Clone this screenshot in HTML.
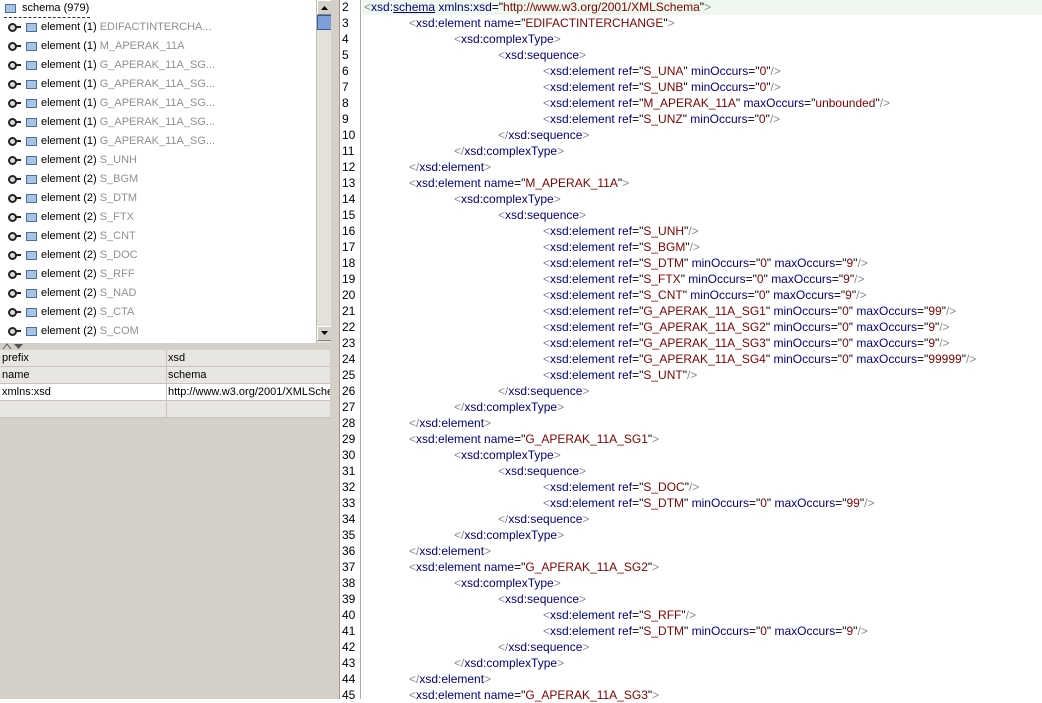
<!DOCTYPE html>
<html><head><meta charset="utf-8"><style>
*{margin:0;padding:0;box-sizing:border-box}
body{width:1042px;height:699px;overflow:hidden;background:#fff;font-family:"Liberation Sans",Arial,sans-serif;font-size:12px;position:relative}
.abs{position:absolute}
#left{left:0;top:0;width:331px;height:699px;background:#d4d0c8}
#tree{left:0;top:0;width:316px;height:343px;background:#fff;font-size:11px}
.row{position:absolute;left:0;height:19px;line-height:19px;white-space:nowrap;color:#000}
.row .g{color:#909090}
.tog{position:absolute;left:8px;top:5px;width:9px;height:9px;border:2.5px solid #222;border-radius:50%;background:#ddd}
.tog:after{content:"";position:absolute;left:6px;top:1px;width:5px;height:2px;background:#222}
.ico{position:absolute;width:11px;height:9px;border:1px solid #4a6f9c;background:#a8c4e4;top:5px}
#sb{left:316px;top:0;width:15px;height:343px;background:#e4e1da;border-left:1px solid #bbb}
.btn{position:absolute;left:0;width:15px;height:15px;background:#d4d0c8;border:1px solid #fff;border-right-color:#808080;border-bottom-color:#808080}
#tbl{left:0;top:350px;width:331px;font-size:11px}
.tr{position:absolute;left:0;width:330px;height:17px;line-height:16px;border-bottom:1px solid #c8c4bc;background:#e8e6e2}
.tr span{position:absolute;top:0}
.tr .c2{left:166px;border-left:1px solid #c8c4bc;padding-left:1px;height:17px}
#split{left:331px;top:0;width:9px;height:699px;background:#d4d0c8;border-right:1px solid #999}
#gut{left:340px;top:0;width:21px;height:699px;background:#fff;border-right:1px solid #aaa}
.ln{position:absolute;left:2px;height:16px;line-height:16px;color:#000;font-size:12px}
.cl{position:absolute;height:16px;line-height:16px;white-space:nowrap;color:#000}
.b{color:#8a8a9a}.t{color:#000080}.v{color:#800000}
</style></head><body>
<div id="left" class="abs">
<div id="tree" class="abs">
<div class="row" style="top:-1px;left:0"><span class="ico" style="left:5px"></span><span style="position:absolute;left:22px">schema (979)</span></div>
<div class="abs" style="left:4px;top:17px;width:86px;border-top:1px dashed #333"></div>
<div class="row" style="top:18px"><span class="tog"></span><span class="ico" style="left:26px"></span><span style="position:absolute;left:41px">element (1) <span class="g">EDIFACTINTERCHA...</span></span></div>
<div class="row" style="top:37px"><span class="tog"></span><span class="ico" style="left:26px"></span><span style="position:absolute;left:41px">element (1) <span class="g">M_APERAK_11A</span></span></div>
<div class="row" style="top:56px"><span class="tog"></span><span class="ico" style="left:26px"></span><span style="position:absolute;left:41px">element (1) <span class="g">G_APERAK_11A_SG...</span></span></div>
<div class="row" style="top:75px"><span class="tog"></span><span class="ico" style="left:26px"></span><span style="position:absolute;left:41px">element (1) <span class="g">G_APERAK_11A_SG...</span></span></div>
<div class="row" style="top:94px"><span class="tog"></span><span class="ico" style="left:26px"></span><span style="position:absolute;left:41px">element (1) <span class="g">G_APERAK_11A_SG...</span></span></div>
<div class="row" style="top:113px"><span class="tog"></span><span class="ico" style="left:26px"></span><span style="position:absolute;left:41px">element (1) <span class="g">G_APERAK_11A_SG...</span></span></div>
<div class="row" style="top:132px"><span class="tog"></span><span class="ico" style="left:26px"></span><span style="position:absolute;left:41px">element (1) <span class="g">G_APERAK_11A_SG...</span></span></div>
<div class="row" style="top:151px"><span class="tog"></span><span class="ico" style="left:26px"></span><span style="position:absolute;left:41px">element (2) <span class="g">S_UNH</span></span></div>
<div class="row" style="top:170px"><span class="tog"></span><span class="ico" style="left:26px"></span><span style="position:absolute;left:41px">element (2) <span class="g">S_BGM</span></span></div>
<div class="row" style="top:189px"><span class="tog"></span><span class="ico" style="left:26px"></span><span style="position:absolute;left:41px">element (2) <span class="g">S_DTM</span></span></div>
<div class="row" style="top:208px"><span class="tog"></span><span class="ico" style="left:26px"></span><span style="position:absolute;left:41px">element (2) <span class="g">S_FTX</span></span></div>
<div class="row" style="top:227px"><span class="tog"></span><span class="ico" style="left:26px"></span><span style="position:absolute;left:41px">element (2) <span class="g">S_CNT</span></span></div>
<div class="row" style="top:246px"><span class="tog"></span><span class="ico" style="left:26px"></span><span style="position:absolute;left:41px">element (2) <span class="g">S_DOC</span></span></div>
<div class="row" style="top:265px"><span class="tog"></span><span class="ico" style="left:26px"></span><span style="position:absolute;left:41px">element (2) <span class="g">S_RFF</span></span></div>
<div class="row" style="top:284px"><span class="tog"></span><span class="ico" style="left:26px"></span><span style="position:absolute;left:41px">element (2) <span class="g">S_NAD</span></span></div>
<div class="row" style="top:303px"><span class="tog"></span><span class="ico" style="left:26px"></span><span style="position:absolute;left:41px">element (2) <span class="g">S_CTA</span></span></div>
<div class="row" style="top:322px"><span class="tog"></span><span class="ico" style="left:26px"></span><span style="position:absolute;left:41px">element (2) <span class="g">S_COM</span></span></div>
</div>
<div id="sb" class="abs">
<div class="btn" style="top:0"><svg width="13" height="13" style="position:absolute;left:0;top:0"><path d="M3 9h7L6.5 5z" fill="#000"/></svg></div>
<div class="abs" style="left:0;top:15px;width:15px;height:15px;background:#7f9fd8;border:1px solid #3a5a9a"></div>
<div class="btn" style="top:326px"><svg width="13" height="13" style="position:absolute;left:0;top:0"><path d="M3 4h7L6.5 8z" fill="#000"/></svg></div>
</div>
<div class="abs" style="left:0;top:343px;width:331px;height:7px;background:#d4d0c8"><svg width="30" height="7" style="position:absolute;left:2px;top:0"><path d="M1 6l4-5 4 5" fill="none" stroke="#555"/><path d="M12 1h9l-4.5 5z" fill="#555"/></svg></div>
<div id="tbl" class="abs">
<div class="tr" style="top:0"><span style="left:2px">prefix</span><span class="c2">xsd</span></div>
<div class="tr" style="top:17px"><span style="left:2px">name</span><span class="c2">schema</span></div>
<div class="tr" style="top:34px;background:#fff"><span style="left:2px">xmlns:xsd</span><span class="c2" style="width:164px;overflow:hidden;white-space:nowrap">http://www.w3.org/2001/XMLSchema</span></div>
<div class="tr" style="top:51px"><span style="left:2px"></span><span class="c2">&nbsp;</span></div>
</div>
</div>
<div id="split" class="abs"></div>
<div id="gut" class="abs">
<div class="ln" style="top:-1px">2</div><div class="ln" style="top:15px">3</div><div class="ln" style="top:31px">4</div><div class="ln" style="top:47px">5</div><div class="ln" style="top:63px">6</div><div class="ln" style="top:79px">7</div><div class="ln" style="top:95px">8</div><div class="ln" style="top:111px">9</div><div class="ln" style="top:127px">10</div><div class="ln" style="top:143px">11</div><div class="ln" style="top:159px">12</div><div class="ln" style="top:175px">13</div><div class="ln" style="top:191px">14</div><div class="ln" style="top:207px">15</div><div class="ln" style="top:223px">16</div><div class="ln" style="top:239px">17</div><div class="ln" style="top:255px">18</div><div class="ln" style="top:271px">19</div><div class="ln" style="top:287px">20</div><div class="ln" style="top:303px">21</div><div class="ln" style="top:319px">22</div><div class="ln" style="top:335px">23</div><div class="ln" style="top:351px">24</div><div class="ln" style="top:367px">25</div><div class="ln" style="top:383px">26</div><div class="ln" style="top:399px">27</div><div class="ln" style="top:415px">28</div><div class="ln" style="top:431px">29</div><div class="ln" style="top:447px">30</div><div class="ln" style="top:463px">31</div><div class="ln" style="top:479px">32</div><div class="ln" style="top:495px">33</div><div class="ln" style="top:511px">34</div><div class="ln" style="top:527px">35</div><div class="ln" style="top:543px">36</div><div class="ln" style="top:559px">37</div><div class="ln" style="top:575px">38</div><div class="ln" style="top:591px">39</div><div class="ln" style="top:607px">40</div><div class="ln" style="top:623px">41</div><div class="ln" style="top:639px">42</div><div class="ln" style="top:655px">43</div><div class="ln" style="top:671px">44</div><div class="ln" style="top:687px">45</div>
</div>
<div class="abs" style="left:362px;top:0;width:680px;height:15px;background:#eef8ee"></div>
<div class="cl" style="top:-1px;left:364px"><span class="b">&lt;</span><span class="t">xsd:<u>schema</u> xmlns:xsd</span>="<span class="v">http://www.w3.org/2001/XMLSchema</span>"<span class="b">&gt;</span></div>
<div class="cl" style="top:15px;left:409px"><span class="b">&lt;</span><span class="t">xsd:element name</span>="<span class="v">EDIFACTINTERCHANGE</span>"<span class="b">&gt;</span></div>
<div class="cl" style="top:31px;left:454px"><span class="b">&lt;</span><span class="t">xsd:complexType</span><span class="b">&gt;</span></div>
<div class="cl" style="top:47px;left:498px"><span class="b">&lt;</span><span class="t">xsd:sequence</span><span class="b">&gt;</span></div>
<div class="cl" style="top:63px;left:543px"><span class="b">&lt;</span><span class="t">xsd:element ref</span>="<span class="v">S_UNA</span>" <span class="t">minOccurs</span>="<span class="v">0</span>"<span class="b">/&gt;</span></div>
<div class="cl" style="top:79px;left:543px"><span class="b">&lt;</span><span class="t">xsd:element ref</span>="<span class="v">S_UNB</span>" <span class="t">minOccurs</span>="<span class="v">0</span>"<span class="b">/&gt;</span></div>
<div class="cl" style="top:95px;left:543px"><span class="b">&lt;</span><span class="t">xsd:element ref</span>="<span class="v">M_APERAK_11A</span>" <span class="t">maxOccurs</span>="<span class="v">unbounded</span>"<span class="b">/&gt;</span></div>
<div class="cl" style="top:111px;left:543px"><span class="b">&lt;</span><span class="t">xsd:element ref</span>="<span class="v">S_UNZ</span>" <span class="t">minOccurs</span>="<span class="v">0</span>"<span class="b">/&gt;</span></div>
<div class="cl" style="top:127px;left:498px"><span class="b">&lt;/</span><span class="t">xsd:sequence</span><span class="b">&gt;</span></div>
<div class="cl" style="top:143px;left:454px"><span class="b">&lt;/</span><span class="t">xsd:complexType</span><span class="b">&gt;</span></div>
<div class="cl" style="top:159px;left:409px"><span class="b">&lt;/</span><span class="t">xsd:element</span><span class="b">&gt;</span></div>
<div class="cl" style="top:175px;left:409px"><span class="b">&lt;</span><span class="t">xsd:element name</span>="<span class="v">M_APERAK_11A</span>"<span class="b">&gt;</span></div>
<div class="cl" style="top:191px;left:454px"><span class="b">&lt;</span><span class="t">xsd:complexType</span><span class="b">&gt;</span></div>
<div class="cl" style="top:207px;left:498px"><span class="b">&lt;</span><span class="t">xsd:sequence</span><span class="b">&gt;</span></div>
<div class="cl" style="top:223px;left:543px"><span class="b">&lt;</span><span class="t">xsd:element ref</span>="<span class="v">S_UNH</span>"<span class="b">/&gt;</span></div>
<div class="cl" style="top:239px;left:543px"><span class="b">&lt;</span><span class="t">xsd:element ref</span>="<span class="v">S_BGM</span>"<span class="b">/&gt;</span></div>
<div class="cl" style="top:255px;left:543px"><span class="b">&lt;</span><span class="t">xsd:element ref</span>="<span class="v">S_DTM</span>" <span class="t">minOccurs</span>="<span class="v">0</span>" <span class="t">maxOccurs</span>="<span class="v">9</span>"<span class="b">/&gt;</span></div>
<div class="cl" style="top:271px;left:543px"><span class="b">&lt;</span><span class="t">xsd:element ref</span>="<span class="v">S_FTX</span>" <span class="t">minOccurs</span>="<span class="v">0</span>" <span class="t">maxOccurs</span>="<span class="v">9</span>"<span class="b">/&gt;</span></div>
<div class="cl" style="top:287px;left:543px"><span class="b">&lt;</span><span class="t">xsd:element ref</span>="<span class="v">S_CNT</span>" <span class="t">minOccurs</span>="<span class="v">0</span>" <span class="t">maxOccurs</span>="<span class="v">9</span>"<span class="b">/&gt;</span></div>
<div class="cl" style="top:303px;left:543px"><span class="b">&lt;</span><span class="t">xsd:element ref</span>="<span class="v">G_APERAK_11A_SG1</span>" <span class="t">minOccurs</span>="<span class="v">0</span>" <span class="t">maxOccurs</span>="<span class="v">99</span>"<span class="b">/&gt;</span></div>
<div class="cl" style="top:319px;left:543px"><span class="b">&lt;</span><span class="t">xsd:element ref</span>="<span class="v">G_APERAK_11A_SG2</span>" <span class="t">minOccurs</span>="<span class="v">0</span>" <span class="t">maxOccurs</span>="<span class="v">9</span>"<span class="b">/&gt;</span></div>
<div class="cl" style="top:335px;left:543px"><span class="b">&lt;</span><span class="t">xsd:element ref</span>="<span class="v">G_APERAK_11A_SG3</span>" <span class="t">minOccurs</span>="<span class="v">0</span>" <span class="t">maxOccurs</span>="<span class="v">9</span>"<span class="b">/&gt;</span></div>
<div class="cl" style="top:351px;left:543px"><span class="b">&lt;</span><span class="t">xsd:element ref</span>="<span class="v">G_APERAK_11A_SG4</span>" <span class="t">minOccurs</span>="<span class="v">0</span>" <span class="t">maxOccurs</span>="<span class="v">99999</span>"<span class="b">/&gt;</span></div>
<div class="cl" style="top:367px;left:543px"><span class="b">&lt;</span><span class="t">xsd:element ref</span>="<span class="v">S_UNT</span>"<span class="b">/&gt;</span></div>
<div class="cl" style="top:383px;left:498px"><span class="b">&lt;/</span><span class="t">xsd:sequence</span><span class="b">&gt;</span></div>
<div class="cl" style="top:399px;left:454px"><span class="b">&lt;/</span><span class="t">xsd:complexType</span><span class="b">&gt;</span></div>
<div class="cl" style="top:415px;left:409px"><span class="b">&lt;/</span><span class="t">xsd:element</span><span class="b">&gt;</span></div>
<div class="cl" style="top:431px;left:409px"><span class="b">&lt;</span><span class="t">xsd:element name</span>="<span class="v">G_APERAK_11A_SG1</span>"<span class="b">&gt;</span></div>
<div class="cl" style="top:447px;left:454px"><span class="b">&lt;</span><span class="t">xsd:complexType</span><span class="b">&gt;</span></div>
<div class="cl" style="top:463px;left:498px"><span class="b">&lt;</span><span class="t">xsd:sequence</span><span class="b">&gt;</span></div>
<div class="cl" style="top:479px;left:543px"><span class="b">&lt;</span><span class="t">xsd:element ref</span>="<span class="v">S_DOC</span>"<span class="b">/&gt;</span></div>
<div class="cl" style="top:495px;left:543px"><span class="b">&lt;</span><span class="t">xsd:element ref</span>="<span class="v">S_DTM</span>" <span class="t">minOccurs</span>="<span class="v">0</span>" <span class="t">maxOccurs</span>="<span class="v">99</span>"<span class="b">/&gt;</span></div>
<div class="cl" style="top:511px;left:498px"><span class="b">&lt;/</span><span class="t">xsd:sequence</span><span class="b">&gt;</span></div>
<div class="cl" style="top:527px;left:454px"><span class="b">&lt;/</span><span class="t">xsd:complexType</span><span class="b">&gt;</span></div>
<div class="cl" style="top:543px;left:409px"><span class="b">&lt;/</span><span class="t">xsd:element</span><span class="b">&gt;</span></div>
<div class="cl" style="top:559px;left:409px"><span class="b">&lt;</span><span class="t">xsd:element name</span>="<span class="v">G_APERAK_11A_SG2</span>"<span class="b">&gt;</span></div>
<div class="cl" style="top:575px;left:454px"><span class="b">&lt;</span><span class="t">xsd:complexType</span><span class="b">&gt;</span></div>
<div class="cl" style="top:591px;left:498px"><span class="b">&lt;</span><span class="t">xsd:sequence</span><span class="b">&gt;</span></div>
<div class="cl" style="top:607px;left:543px"><span class="b">&lt;</span><span class="t">xsd:element ref</span>="<span class="v">S_RFF</span>"<span class="b">/&gt;</span></div>
<div class="cl" style="top:623px;left:543px"><span class="b">&lt;</span><span class="t">xsd:element ref</span>="<span class="v">S_DTM</span>" <span class="t">minOccurs</span>="<span class="v">0</span>" <span class="t">maxOccurs</span>="<span class="v">9</span>"<span class="b">/&gt;</span></div>
<div class="cl" style="top:639px;left:498px"><span class="b">&lt;/</span><span class="t">xsd:sequence</span><span class="b">&gt;</span></div>
<div class="cl" style="top:655px;left:454px"><span class="b">&lt;/</span><span class="t">xsd:complexType</span><span class="b">&gt;</span></div>
<div class="cl" style="top:671px;left:409px"><span class="b">&lt;/</span><span class="t">xsd:element</span><span class="b">&gt;</span></div>
<div class="cl" style="top:687px;left:409px"><span class="b">&lt;</span><span class="t">xsd:element name</span>="<span class="v">G_APERAK_11A_SG3</span>"<span class="b">&gt;</span></div>
</body></html>
